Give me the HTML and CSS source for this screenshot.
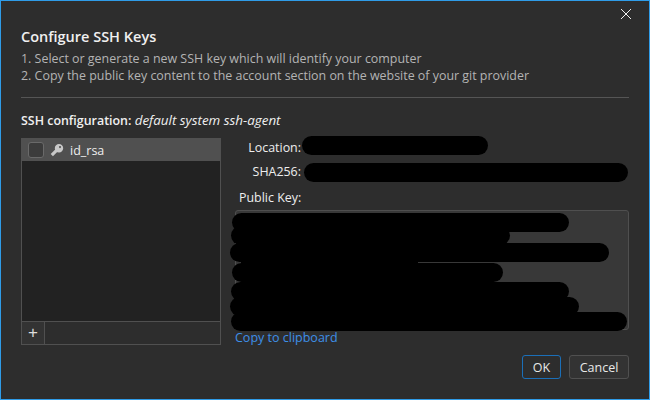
FILE: index.html
```html
<!DOCTYPE html>
<html lang="en">
<head>
<meta charset="utf-8">
<title>Configure SSH Keys</title>
<link rel="stylesheet" href="styles.css">
</head>
<body>
<div class="dialog">
  <button class="close" aria-label="Close">
    <svg width="12" height="12" viewBox="0 0 12 12"><path d="M1 1 L11 11 M11 1 L1 11" stroke="#f0f0f0" stroke-width="1" fill="none"/></svg>
  </button>
  <h1 class="title">Configure SSH Keys</h1>
  <p class="help">1. Select or generate a new SSH key which will identify your computer</p>
  <p class="help">2. Copy the public key content to the account section on the website of your git provider</p>
  <hr class="rule">
  <div class="config"><b>SSH configuration:</b> <i>default system ssh-agent</i></div>
  <div class="main">
    <div class="list">
      <div class="rows">
        <div class="row">
          <span class="check"></span>
          <svg class="key" width="14" height="14" viewBox="0 0 14 14"><path d="M9 1 a4.2 4.2 0 1 1 0 8.4 a4.2 4.2 0 1 1 0 -8.4 Z M10 3 a1 1 0 1 0 .01 0 Z" fill="#c8c8c8" fill-rule="evenodd"/><path d="M6.6 7.4 L1.8 12.2" stroke="#c8c8c8" stroke-width="3.2" fill="none"/></svg>
          <span class="name">id_rsa</span>
        </div>
      </div>
      <div class="toolbar"><button class="add">+</button></div>
    </div>
    <div class="details">
      <div class="field"><span class="label">Location:</span></div>
      <div class="field"><span class="label">SHA256:</span></div>
      <div class="pk-label">Public Key:</div>
      <div class="pk-box"></div>
      <a class="link" href="#">Copy to clipboard</a>
      <span class="blob b-loc"></span>
      <span class="blob b-sha"></span>
      <span class="blob b1"></span>
      <span class="blob b2"></span>
      <span class="blob b3"></span>
      <span class="blob b4"></span>
      <span class="blob b5"></span>
      <span class="blob b6"></span>
      <span class="blob b7"></span>
      <span class="blob b8"></span>
    </div>
  </div>
  <div class="buttons">
    <button class="btn primary">OK</button>
    <button class="btn cancel">Cancel</button>
  </div>
</div>
</body>
</html>
```
FILE: styles.css
```css
* { box-sizing: border-box; }
html, body { margin: 0; padding: 0; }
body { width: 650px; height: 400px; overflow: hidden; background: #2d2d2d; }
.dialog {
  position: relative;
  width: 650px;
  height: 400px;
  padding: 26px 20px 0 20px;
  border: 1px solid #2f9ce8;
  background: #2d2d2d;
  color: #d4d4d4;
  font-family: "Open Sans", "Noto Sans", sans-serif;
  font-size: 12.43px;
}
.close {
  position: absolute;
  top: 7px;
  right: 17px;
  padding: 0;
  width: 12px;
  height: 12px;
  border: 0;
  background: none;
  display: block;
}
.close svg { display: block; }
.title { margin: 0 0 3px; font-size: 14.5px; line-height: 20px; font-weight: 600; color: #f0f0f0; }
.help { margin: 0; line-height: 17px; color: #b4b4b4; }
.rule { margin: 13px 0 0 0; border: 0; height: 1px; background: #555; }
.config { margin-top: 13px; line-height: 18px; color: #f0f0f0; }
.config b { font-weight: 600; }
.config i { font-size: 13.4px; }
.main { display: flex; margin-top: 8px; height: 207px; }
.list {
  width: 200px;
  display: flex;
  flex-direction: column;
  border: 1px solid #505050;
  background: #222;
}
.rows { flex: 1; }
.row { display: flex; align-items: center; height: 22px; background: #505050; padding-left: 6px; }
.check { width: 16px; height: 16px; border: 1px solid #6a6a6a; border-radius: 3px; background: #3c3c3c; }
.key { margin-left: 6px; }
.name { margin-left: 6px; color: #eee; font-size: 12.5px; }
.toolbar { height: 23px; border-top: 1px solid #505050; background: #2d2d2d; display: flex; }
.add {
  width: 23px;
  padding: 0;
  border: 0;
  border-right: 1px solid #505050;
  background: #333;
  color: #ddd;
  font: 400 17px/20px "Liberation Sans", sans-serif;
}
.details { position: relative; flex: 1; }
.field { display: flex; justify-content: flex-end; height: 25px; width: 80px; line-height: 18px; color: #eee; }
.field:first-child { margin-top: 1px; height: 24px; }
.label { display: block; }
.pk-label { position: absolute; top: 51px; left: 18px; line-height: 18px; color: #eee; }
.pk-box {
  position: absolute;
  top: 72px;
  left: 14px;
  width: 394px;
  height: 120px;
  border: 1px solid #4f4f4f;
  border-radius: 3px;
  background: #383838;
}
.link { position: absolute; top: 191px; left: 14px; font-size: 12.5px; line-height: 18px; color: #3d8fe8; text-decoration: none; }
.blob { position: absolute; height: 19px; border-radius: 10px; background: #000; }
.b-loc { top: -2px; left: 81px; width: 186px; }
.b-sha { top: 25px; left: 83px; width: 324px; }
.b1 { top: 75px; left: 11px; width: 337px; }
.b2 { top: 88px; left: 10px; width: 279px; }
.b3 { top: 105px; left: 9px; width: 379px; }
.b4 { top: 125px; left: 11px; width: 271px; }
.b5 { top: 144px; left: 10px; width: 338px; }
.b6 { top: 159px; left: 9px; width: 349px; }
.b7 { top: 174px; left: 10px; width: 396px; }
.b8 { top: 122px; left: 20px; width: 177px; height: 6px; border-radius: 0; }
.buttons { display: flex; justify-content: flex-end; gap: 8px; margin-top: 10px; }
.btn {
  height: 24px;
  padding: 0;
  border: 1px solid #505050;
  border-radius: 3px;
  background: #333;
  color: #e8e8e8;
  font: 12.5px "Open Sans", sans-serif;
}
.primary { width: 39px; border-color: #1b6fb8; background: #2d2d2d; }
.cancel { width: 60px; }
```
